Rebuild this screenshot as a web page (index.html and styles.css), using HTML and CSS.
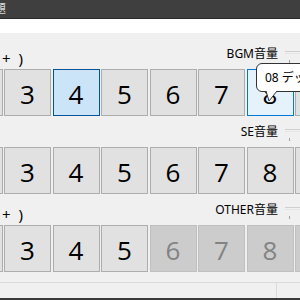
FILE: index.html
```html
<!DOCTYPE html>
<html lang="ja">
<head>
    <meta charset="UTF-8">
    <title>音量設定</title>
    <link rel="stylesheet" href="styles.css">
</head>
<body>
    <div class="window">
        <!-- Title bar -->
        <div class="titlebar"><span class="title">問題</span></div>
        <div class="toolbar"></div>

        <div class="content">
            <!-- BGM -->
            <div class="group first">
                <div class="group-head">
                    <span class="side-label">+ )</span>
                    <div class="volume">
                        <span class="volume-label">BGM音量</span>
                        <div class="slider"><span class="tick"></span></div>
                    </div>
                </div>
                <div class="keys">
                    <button class="key">2</button>
                    <button class="key">3</button>
                    <button class="key selected">4</button>
                    <button class="key">5</button>
                    <button class="key">6</button>
                    <button class="key">7</button>
                    <button class="key hover">8</button>
                    <button class="key">9</button>
                </div>
            </div>

            <!-- SE -->
            <div class="group">
                <div class="group-head">
                    <span class="side-label"></span>
                    <div class="volume">
                        <span class="volume-label">SE音量</span>
                        <div class="slider"><span class="tick"></span></div>
                    </div>
                </div>
                <div class="keys">
                    <button class="key">2</button>
                    <button class="key">3</button>
                    <button class="key">4</button>
                    <button class="key">5</button>
                    <button class="key">6</button>
                    <button class="key">7</button>
                    <button class="key">8</button>
                    <button class="key">9</button>
                </div>
            </div>

            <!-- OTHER -->
            <div class="group">
                <div class="group-head">
                    <span class="side-label">+ )</span>
                    <div class="volume">
                        <span class="volume-label">OTHER音量</span>
                        <div class="slider"><span class="tick"></span></div>
                    </div>
                </div>
                <div class="keys">
                    <button class="key">2</button>
                    <button class="key">3</button>
                    <button class="key">4</button>
                    <button class="key">5</button>
                    <button class="key" disabled>6</button>
                    <button class="key" disabled>7</button>
                    <button class="key" disabled>8</button>
                    <button class="key" disabled>9</button>
                </div>
            </div>

            <div class="footer">
                <div class="footer-cell"></div>
            </div>
        </div>
        <div class="bottom-edge"></div>

        <!-- Tooltip over key 8 -->
        <div class="tooltip">
            08 デッキ
            <svg class="tooltip-tail" width="16" height="12" viewBox="0 0 16 12">
                <path d="M1 0 L4 10 L12 0" fill="#fff" stroke="#333" stroke-width="1"/>
            </svg>
        </div>
    </div>
</body>
</html>
```

FILE: styles.css
```css
* {
    box-sizing: border-box;
    margin: 0;
    padding: 0;
}
html, body {
    width: 300px;
    height: 300px;
    overflow: hidden;
}
body {
    font-family: 'Noto Sans', 'Noto Sans CJK JP', sans-serif;
    background-color: #f0f0f0;
}
.window {
    position: relative;
    width: 300px;
    height: 300px;
    overflow: hidden;
    display: flex;
    flex-direction: column;
}
.titlebar {
    height: 19px;
    background-color: #3f3f3f;
    border-bottom: 1px solid #2a2a2a;
    display: flex;
    align-items: center;
    overflow: hidden;
}
.title {
    margin-left: -18px;
    font-size: 12px;
    line-height: 14px;
    color: #d8d8d8;
}
.toolbar {
    height: 14px;
    background-color: #ffffff;
}
.content {
    flex-grow: 1;
    background-color: #f0f0f0;
    display: flex;
    flex-direction: column;
}
.group-head {
    height: 31px;
    display: flex;
    justify-content: space-between;
    align-items: flex-end;
}
.group.first .group-head {
    height: 36px;
}
.side-label {
    margin-left: 2px;
    margin-bottom: 3px;
    font-size: 15px;
    line-height: 16px;
    color: #000;
    word-spacing: 4px;
}
.volume {
    display: flex;
    align-items: center;
    margin-bottom: 8px;
    margin-right: -8px;
}
.volume-label {
    font-size: 12px;
    line-height: 14px;
    color: #000;
}
.slider {
    position: relative;
    width: 23px;
    height: 3px;
    margin-left: 7px;
    margin-top: -4px;
    border-top: 1px solid #cfcfcf;
    border-bottom: 1px solid #e6e6e6;
}
.tick {
    position: absolute;
    left: 4px;
    top: 8px;
    width: 1px;
    height: 3px;
    background-color: #a0a0a0;
}
.keys {
    display: flex;
    gap: 1.5px;
    margin-left: -44.5px;
}
.key {
    flex: 0 0 47px;
    height: 47px;
    background-color: #e1e1e1;
    border: 1px solid #adadad;
    font-family: 'Open Sans', sans-serif;
    font-size: 26px;
    line-height: 45px;
    padding-top: 2px;
    color: #000;
}
.key.selected {
    background-color: #cce4f7;
    border-color: #005499;
}
.key.hover {
    background-color: #e5f1fb;
    border-color: #0078d7;
}
.key:disabled {
    background-color: #cccccc;
    border-color: #bfbfbf;
    color: #838383;
}
.footer {
    margin-top: 10px;
    flex-grow: 1;
    border-top: 1px solid #dadada;
    display: flex;
    justify-content: flex-end;
}
.footer-cell {
    width: 24px;
    border-left: 1px solid #dadada;
}
.bottom-edge {
    height: 2px;
    background-color: #3a3a3a;
}

/* Tooltip */
.tooltip {
    position: absolute;
    left: 256px;
    top: 63px;
    width: 70px;
    height: 29px;
    padding-left: 8px;
    background-color: #ffffff;
    border: 1px solid #333;
    border-radius: 6px;
    font-family: 'Noto Sans', 'Noto Sans CJK JP', sans-serif;
    font-size: 12px;
    line-height: 27px;
    color: #000;
    white-space: nowrap;
}
.tooltip-tail {
    position: absolute;
    left: 8px;
    top: 27px;
}
```
